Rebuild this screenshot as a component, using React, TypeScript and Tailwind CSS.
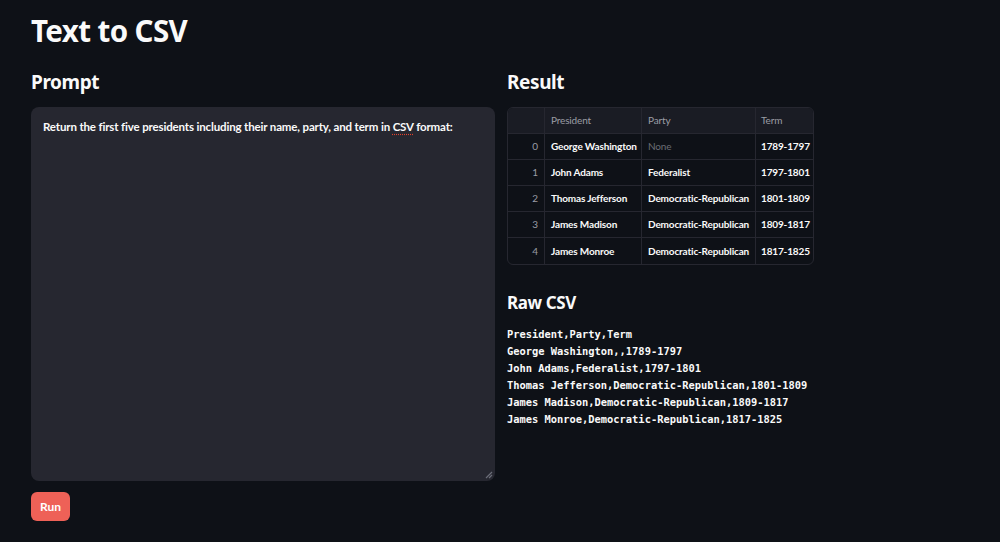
import React from "react";

const rows = [
  ["0", "George Washington", null, "1789-1797"],
  ["1", "John Adams", "Federalist", "1797-1801"],
  ["2", "Thomas Jefferson", "Democratic-Republican", "1801-1809"],
  ["3", "James Madison", "Democratic-Republican", "1809-1817"],
  ["4", "James Monroe", "Democratic-Republican", "1817-1825"],
];

const csv = [
  "President,Party,Term",
  "George Washington,,1789-1797",
  "John Adams,Federalist,1797-1801",
  "Thomas Jefferson,Democratic-Republican,1801-1809",
  "James Madison,Democratic-Republican,1809-1817",
  "James Monroe,Democratic-Republican,1817-1825",
];

export default function App() {
  return (
    <div
      className="w-[1000px] h-[542px] bg-[#0e1117] text-[#fafafa] overflow-hidden"
      style={{ fontFamily: '"Noto Sans", "Open Sans", sans-serif' }}
    >
      <div className="pl-[31px] pt-[11px]">
        <h1 className="text-[29.5px] font-bold leading-[40px] tracking-[-0.6px]">Text to CSV</h1>
        <div className="flex gap-[12px] mt-[18px]">
          <div className="w-[464px] flex flex-col">
            <h2 className="text-[19px] font-bold leading-[26px] tracking-[-0.4px]">Prompt</h2>
            <div className="relative mt-[12px] h-[374px] rounded-[8px] bg-[#262730] px-[12px] py-[12px]">
              <p
                className="text-[11.5px] font-bold leading-[16px] whitespace-nowrap tracking-[-0.15px]"
                style={{ fontFamily: 'Lato, "Noto Sans", sans-serif' }}
              >
                Return the first five presidents including their name, party, and term in{" "}
                <span className="underline decoration-dotted decoration-[#e0422f] underline-offset-[3px]">CSV</span>{" "}
                format:
              </p>
              <svg className="absolute right-[2px] bottom-[2px]" width="8" height="8" viewBox="0 0 8 8">
                <path d="M7 1 L1 7 M7 4 L4 7" stroke="#6b6e78" strokeWidth="1.2" />
              </svg>
            </div>
            <button
              className="mt-[11px] self-start h-[29px] w-[39px] rounded-[6px] bg-[#ee6157] text-[12px] font-bold text-white"
              style={{ fontFamily: 'Lato, "Noto Sans", sans-serif' }}
            >
              Run
            </button>
          </div>
          <div className="flex flex-col">
            <h2 className="text-[19px] font-bold leading-[26px] tracking-[-0.4px]">Result</h2>
            <div
              className="mt-[12px] w-[307px] rounded-[6px] border border-[#262730] overflow-hidden text-[10px] tracking-[-0.15px] whitespace-nowrap"
              style={{ fontFamily: 'Lato, "Noto Sans", sans-serif' }}
            >
              <div className="grid grid-cols-[37px_97px_114px_57px] h-[26px] bg-[#1a1c24] text-[#9a9ca5] border-b border-[#262730]">
                <div className="border-r border-[#262730]" />
                <div className="border-r border-[#262730] px-[6px] flex items-center">President</div>
                <div className="border-r border-[#262730] px-[6px] flex items-center">Party</div>
                <div className="px-[5px] flex items-center">Term</div>
              </div>
              {rows.map((r, i) => (
                <div
                  key={r[0] as string}
                  className={`grid grid-cols-[37px_97px_114px_57px] h-[26px] ${i < rows.length - 1 ? "border-b border-[#262730]" : ""}`}
                >
                  <div className="border-r border-[#262730] px-[6px] flex items-center justify-end text-[#9a9ca5]">{r[0]}</div>
                  <div className="border-r border-[#262730] px-[6px] flex items-center font-bold overflow-hidden">{r[1]}</div>
                  <div className={`border-r border-[#262730] px-[6px] flex items-center overflow-hidden ${r[2] ? "font-bold" : "text-[#6b6d75]"}`}>
                    {r[2] ?? "None"}
                  </div>
                  <div className="px-[5px] flex items-center font-bold overflow-hidden">{r[3]}</div>
                </div>
              ))}
            </div>
            <h3 className="mt-[26px] text-[17px] font-bold leading-[24px] tracking-[-0.4px]">Raw CSV</h3>
            <pre
              className="mt-[11px] text-[10.4px] leading-[17px] font-bold"
              style={{ fontFamily: '"DejaVu Sans Mono", "Liberation Mono", monospace' }}
            >
              {csv.join("\n")}
            </pre>
          </div>
        </div>
      </div>
    </div>
  );
}
